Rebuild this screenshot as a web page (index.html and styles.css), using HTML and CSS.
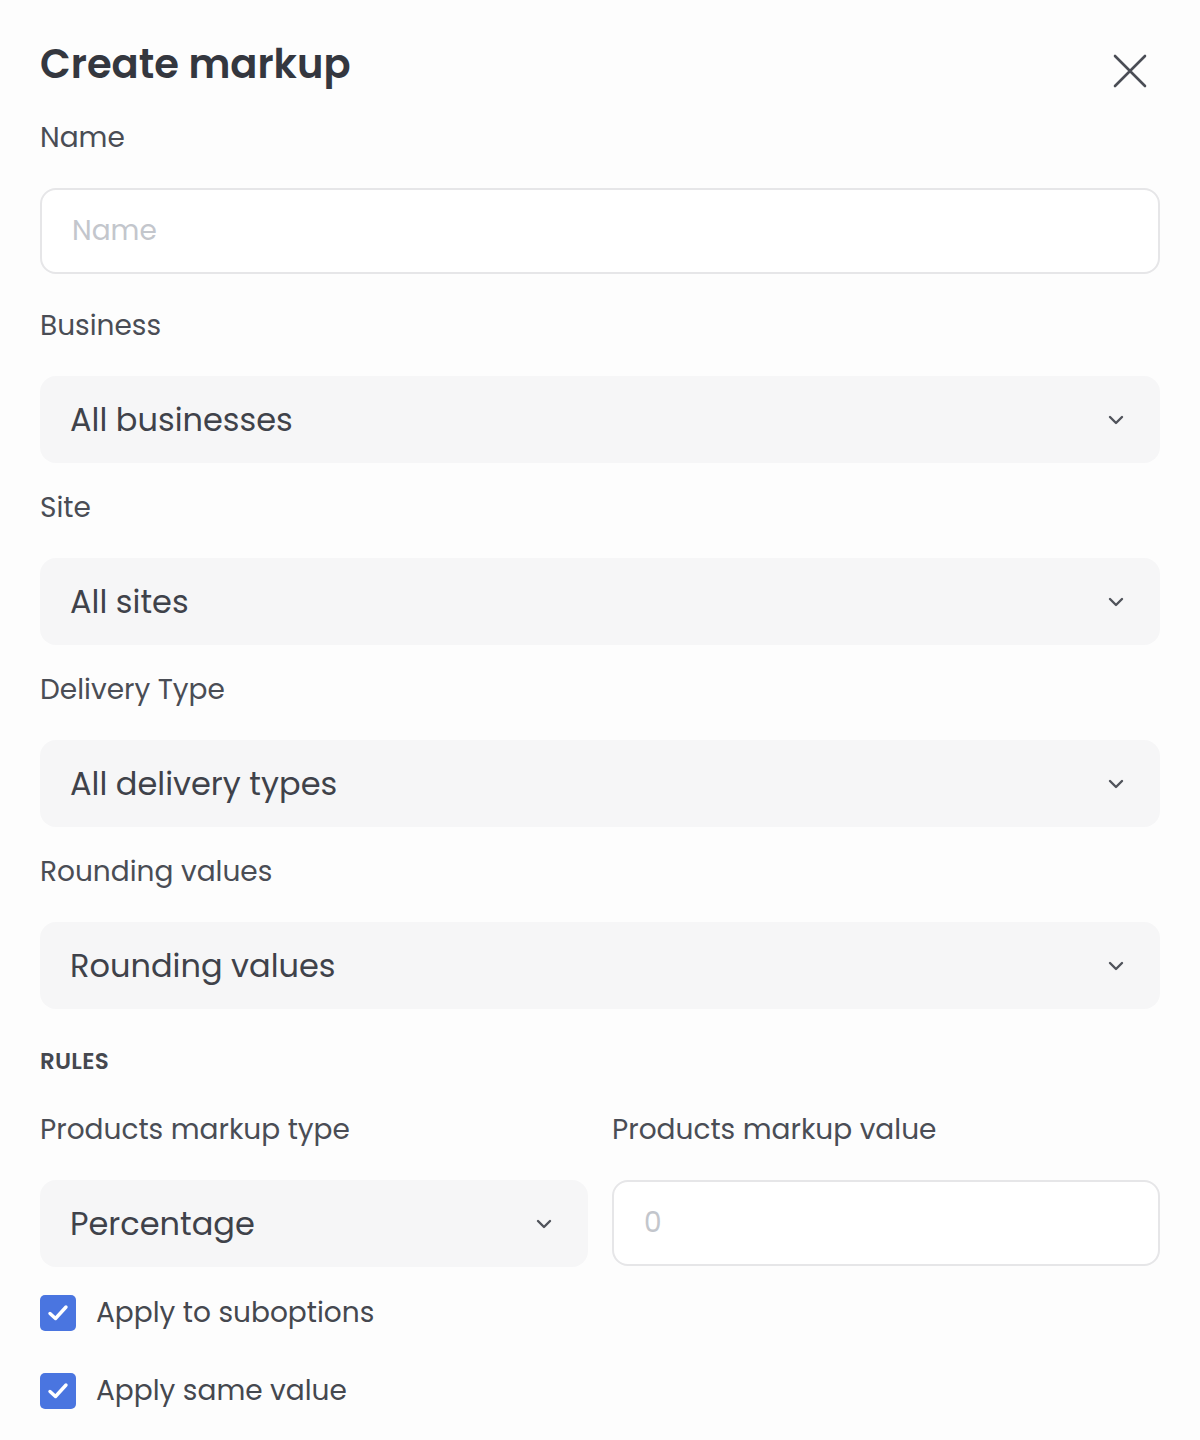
FILE: index.html
```html
<!DOCTYPE html>
<html>
<head>
    <meta charset="UTF-8">
    <meta name="viewport" content="width=device-width, initial-scale=1.0">
    <title>Create markup</title>
    <link rel="stylesheet" href="styles.css">
</head>
<body>
    <div class="markup-panel">
        <div class="panel-header">
            <h2>Create markup</h2>
            <button type="button" class="close-btn" aria-label="Close">
                <svg width="34" height="34" viewBox="0 0 34 34" fill="none" stroke="#4a4d55" stroke-width="2.6" stroke-linecap="round">
                    <path d="M2 2 L32 32 M32 2 L2 32"/>
                </svg>
            </button>
        </div>

        <form id="markupForm">
            <div class="field field-name">
                <label for="name">Name</label>
                <input type="text" id="name" class="text-input" placeholder="Name">
            </div>

            <div class="field">
                <label>Business</label>
                <div class="select-box">
                    <span>All businesses</span>
                    <svg class="chevron" width="16" height="10" viewBox="0 0 16 10" fill="none" stroke="#50535b" stroke-width="2.4" stroke-linecap="round" stroke-linejoin="round"><path d="M2 2 L8 8 L14 2"/></svg>
                </div>
            </div>

            <div class="field">
                <label>Site</label>
                <div class="select-box">
                    <span>All sites</span>
                    <svg class="chevron" width="16" height="10" viewBox="0 0 16 10" fill="none" stroke="#50535b" stroke-width="2.4" stroke-linecap="round" stroke-linejoin="round"><path d="M2 2 L8 8 L14 2"/></svg>
                </div>
            </div>

            <div class="field">
                <label>Delivery Type</label>
                <div class="select-box">
                    <span>All delivery types</span>
                    <svg class="chevron" width="16" height="10" viewBox="0 0 16 10" fill="none" stroke="#50535b" stroke-width="2.4" stroke-linecap="round" stroke-linejoin="round"><path d="M2 2 L8 8 L14 2"/></svg>
                </div>
            </div>

            <div class="field">
                <label>Rounding values</label>
                <div class="select-box">
                    <span>Rounding values</span>
                    <svg class="chevron" width="16" height="10" viewBox="0 0 16 10" fill="none" stroke="#50535b" stroke-width="2.4" stroke-linecap="round" stroke-linejoin="round"><path d="M2 2 L8 8 L14 2"/></svg>
                </div>
            </div>

            <div class="section-title">RULES</div>

            <div class="rules-row">
                <div class="field">
                    <label>Products markup type</label>
                    <div class="select-box">
                        <span>Percentage</span>
                        <svg class="chevron" width="16" height="10" viewBox="0 0 16 10" fill="none" stroke="#50535b" stroke-width="2.4" stroke-linecap="round" stroke-linejoin="round"><path d="M2 2 L8 8 L14 2"/></svg>
                    </div>
                </div>
                <div class="field">
                    <label for="markupValue">Products markup value</label>
                    <input type="text" id="markupValue" class="text-input" placeholder="0">
                </div>
            </div>

            <label class="check-row">
                <span class="checkbox">
                    <svg width="24" height="20" viewBox="0 0 24 20" fill="none" stroke="#fff" stroke-width="3.4" stroke-linecap="round" stroke-linejoin="round"><path d="M4 10.5 L9.5 15.5 L20 4"/></svg>
                </span>
                Apply to suboptions
            </label>
            <label class="check-row">
                <span class="checkbox">
                    <svg width="24" height="20" viewBox="0 0 24 20" fill="none" stroke="#fff" stroke-width="3.4" stroke-linecap="round" stroke-linejoin="round"><path d="M4 10.5 L9.5 15.5 L20 4"/></svg>
                </span>
                Apply same value
            </label>
        </form>
    </div>
</body>
</html>
```

FILE: styles.css
```css
body {
    margin: 0;
    padding: 0;
    background-color: #fdfdfd;
    font-family: Poppins, Inter, 'Noto Sans', sans-serif;
    color: #45484f;
}
.markup-panel {
    padding: 38px 40px 0 40px;
}
.panel-header {
    display: flex;
    justify-content: space-between;
    align-items: flex-start;
    height: 80px;
}
.panel-header h2 {
    margin: 0;
    font-size: 40px;
    line-height: 52px;
    font-weight: 600;
    color: #34373f;
}
.close-btn {
    margin: 16px 13px 0 0;
    padding: 0;
    border: none;
    background: none;
    cursor: pointer;
}
.field {
    display: flex;
    flex-direction: column;
    margin-bottom: 25px;
}
.field label {
    font-size: 28px;
    line-height: 40px;
    color: #4a4d55;
    margin-bottom: 30px;
}
.field-name {
    margin-bottom: 32px;
}
.text-input {
    box-sizing: border-box;
    height: 86px;
    width: 100%;
    padding: 0 30px;
    border: 2px solid #e6e6e8;
    border-radius: 16px;
    background-color: #fff;
    font-family: inherit;
    font-size: 28px;
    color: #45484f;
    outline: none;
}
.text-input::placeholder {
    color: #c3c6cc;
}
.select-box {
    display: flex;
    align-items: center;
    justify-content: space-between;
    height: 87px;
    padding: 0 36px 0 30px;
    border-radius: 16px;
    background-color: #f6f6f7;
    font-size: 32px;
    color: #3f424a;
    cursor: pointer;
}
.section-title {
    margin-top: 32px;
    font-size: 23px;
    line-height: 40px;
    font-weight: 600;
    color: #45484f;
    letter-spacing: 0.3px;
}
.rules-row {
    display: grid;
    grid-template-columns: 1fr 1fr;
    column-gap: 24px;
    margin-top: 29px;
}
.rules-row .field {
    margin-bottom: 26px;
}
.check-row {
    display: flex;
    align-items: center;
    gap: 20px;
    height: 40px;
    margin-bottom: 38px;
    font-size: 28px;
    color: #45484f;
    cursor: pointer;
}
.checkbox {
    display: flex;
    align-items: center;
    justify-content: center;
    width: 36px;
    height: 36px;
    border-radius: 5px;
    background-color: #4a75e0;
}
```
